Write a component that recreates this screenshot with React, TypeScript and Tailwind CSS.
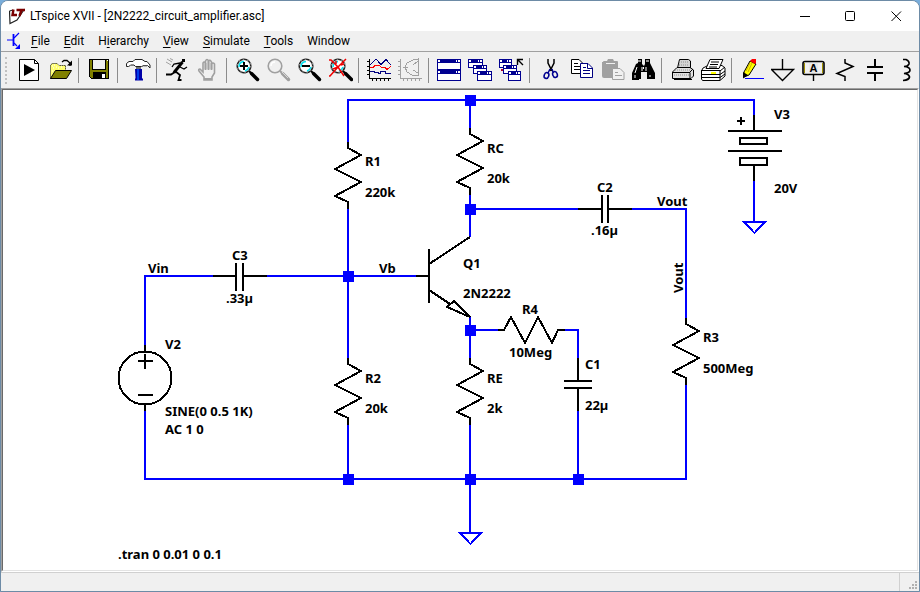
import type { ReactNode } from 'react';

const menus = [
  { before: '', key: 'F', after: 'ile' },
  { before: '', key: 'E', after: 'dit' },
  { before: 'H', key: 'i', after: 'erarchy' },
  { before: '', key: 'V', after: 'iew' },
  { before: '', key: 'S', after: 'imulate' },
  { before: '', key: 'T', after: 'ools' },
  { before: 'Window', key: '', after: '' },
];

// Magnifier shared by the four zoom tools
function Lens({ dim = false, children }: { dim?: boolean; children?: ReactNode }) {
  const ink = dim ? '#a0a0a0' : '#000';
  return (
    <>
      <circle cx="9" cy="8" r="6.800" fill={dim ? '#f0f0f0' : '#fff'} stroke={dim ? '#a0a0a0' : '#222'} strokeWidth="1.600" />
      {dim ? (
        <path d="M5 8 Q5 4 9 4" fill="none" stroke="#fff" strokeWidth="1.500" />
      ) : (
        <>
          <path d="M4 9 Q4 4 9 3.500M10 13 Q13 12 14 9" fill="none" stroke="#00e0f0" strokeWidth="1.500" />
          <circle cx="9" cy="8" r="7" fill="none" stroke="#909090" strokeWidth="1.600" strokeDasharray="1.500 3" />
        </>
      )}
      <path d="M14 13L16 15" stroke={ink} strokeWidth="2" />
      <path d="M16.500 15.500L22.500 21.500" stroke={ink} strokeWidth="3.500" strokeLinecap="round" />
      {dim && <path d="M16 14L22 20" stroke="#d8d8d8" strokeWidth="1" />}
      {children}
    </>
  );
}

function MiniWindow({ x, y, w = 14, h = 9 }: { x: number; y: number; w?: number; h?: number }) {
  return (
    <g shapeRendering="crispEdges">
      <rect x={x} y={y} width={w} height={h} fill="#000090" />
      <rect x={x + 1} y={y + 4} width={w - 2} height={h - 5} fill="#fff" />
      <rect x={x + 1} y={y + 1} width="2" height="2" fill="#fff" />
      <rect x={x + w - 5} y={y + 1} width="1" height="2" fill="#fff" />
      <rect x={x + w - 3} y={y + 1} width="2" height="2" fill="#fff" />
    </g>
  );
}

const icons: Record<string, ReactNode> = {
  new: (
    <>
      <path d="M2.500 1.500H17.500L21.500 5.500V22.500H2.500Z" fill="#fff" stroke="#000" />
      <path d="M17.500 1.500V5.500H21.500" fill="none" stroke="#000" />
      <path d="M7 6L18 12L7 18Z" />
    </>
  ),
  open: (
    <>
      <path d="M2.500 20.500V7L4.500 5.500H9L11 7.500H17.500V13H7Z" fill="#ffff70" />
      <path d="M2.500 20.500V7L4.500 5.500H9L11 7.500H17.500V12" fill="none" stroke="#000" strokeDasharray="1 1" />
      <path d="M4 8h1M6 7h1M8 9h1M5 10h1M10 10h1M13 9h1M4 13h1" stroke="#fff" />
      <path d="M2.500 20.500L7.500 12.500H23.500L18.500 20.500Z" fill="#808000" stroke="#000" />
      <path d="M14 4L16 2.500H19L22 5V8" fill="none" stroke="#000" strokeWidth="1.300" />
      <path d="M19 7.500H24V2.500Z" />
    </>
  ),
  save: (
    <g shapeRendering="crispEdges">
      <path d="M2 1H22V21H4L2 19Z" fill="#000" />
      <path d="M3 2H5V12H19V2H21V20H19V14H6V20H4L3 19Z" fill="#808000" />
      <rect x="6" y="2" width="12" height="9" fill="#f0f0f0" />
      <rect x="5" y="12" width="14" height="2" fill="#808000" />
      <rect x="15" y="16" width="3" height="4" fill="#fff" />
      <rect x="20" y="2" width="1" height="1" fill="#fff" />
    </g>
  ),
  hammer: (
    <>
      <path d="M9 11H16V20L17 21V22.500H9V21L9.500 20Z" fill="#0000a8" />
      <path d="M12 11V22" stroke="#0050ff" strokeWidth="1.500" />
      <path d="M.500 5.500L3 3.500H7L9 1.500H16L19 3.500H21L24 7V10L21.500 7.500H18L15.500 8.500H9.500L8 7H5L2.500 8.500H.500Z" fill="#fff" stroke="#222" />
      <path d="M4 7.500H8M18 8H21" stroke="#808080" />
      <path d="M10 9H15V11H10Z" fill="#707070" />
    </>
  ),
  run: (
    <>
      <path d="M17 1H20V4H17Z" />
      <path d="M17.500 4L9 14.500" stroke="#000" strokeWidth="3" />
      <path d="M15 5L9 6L7 9M15 9L19 11L22 9" fill="none" stroke="#000" strokeWidth="1.300" />
      <path d="M10 14L6 16.500H1M10 13L15 17L13.500 22H16.500" fill="none" stroke="#000" strokeWidth="1.800" />
      <path d="M2 1L7 4M1 4L6 7M5 .500L8 2" stroke="#a0a0a0" />
    </>
  ),
  hand: (
    <>
      <path
        d="M8 19L3 13Q2 11 4 11L7 14V5Q8 3 9.500 5V11V3Q11 0 12.500 3V11V3Q14 1 15.500 4V11V6Q17 4 18.500 6V15L16 19V22H8Z"
        fill="#f0f0f0"
        stroke="#a0a0a0"
        strokeWidth="1.600"
      />
      <path d="M8 21H16M9.500 5V12M12.500 3V12M15.500 5V12" stroke="#a0a0a0" strokeWidth="1.800" />
    </>
  ),
  zoomIn: (
    <Lens>
      <path d="M9 4V12M5 8H13" stroke="#000" strokeWidth="2" />
    </Lens>
  ),
  zoomBack: <Lens dim />,
  zoomOut: (
    <Lens>
      <path d="M5 8H13" stroke="#000" strokeWidth="2" />
    </Lens>
  ),
  zoomFit: (
    <g transform="translate(1 0)">
      <Lens>
        <path d="M0 2H2L9 9L15 18M17 1L9 9L1 18H0M9 9L4 11M7 3V6M12 7L15 6" fill="none" stroke="#f00000" strokeWidth="1.500" />
      </Lens>
    </g>
  ),
  plot: (
    <g shapeRendering="crispEdges" fill="none">
      <path d="M2.500 1V21M2 20.500H24M0 3.500H2M0 8.500H2M0 12.500H2M0 16.500H2M5.500 21V23M9.500 21V23M13.500 21V23M17.500 21V23M21.500 21V23" stroke="#000" />
      <path d="M3 7L9 1L14 6.500L19 1.500L24 7" stroke="#000080" />
      <path d="M3 9.500H6L8 7.500H12L15 9.500H18L20 11.500L24 8.500" stroke="#f00" />
      <path d="M3 13.500H7V14.500H11V15.500H13V13.500H18V15.500H24" stroke="#000080" />
    </g>
  ),
  fft: (
    <g shapeRendering="crispEdges" fill="none" stroke="#a0a0a0">
      <path d="M2.500 1V21M2 20.500H24M0 3.500H2M0 8.500H2M0 12.500H2M0 16.500H2M5.500 21V23M9.500 21V23M13.500 21V23M17.500 21V23M21.500 21V23" />
      <path d="M20.500 0V18M20 1L15 2L9 5L7 9L9 14L14 17L20 18M20 3L15 7M20 15L15 12" />
      <path d="M5 9.500H10" />
    </g>
  ),
  tile: (
    <>
      <MiniWindow x={0} y={1} w={24} h={11} />
      <MiniWindow x={0} y={12} w={24} h={11} />
    </>
  ),
  cascade: (
    <>
      <MiniWindow x={0} y={1} w={15} />
      <MiniWindow x={5} y={7} />
      <MiniWindow x={9} y={13} w={15} h={10} />
    </>
  ),
  closeAll: (
    <>
      <MiniWindow x={0} y={1} w={13} />
      <MiniWindow x={4} y={7} />
      <MiniWindow x={9} y={13} w={13} h={10} />
      <rect x="2" y="11" width="2" height="2" fill="#b00030" />
      <path d="M18.500 7V1.500H24M19 2L24 7" fill="none" stroke="#000" strokeWidth="1.400" />
    </>
  ),
  cut: (
    <>
      <path d="M10 1V5L14 13M16 1V5L12 13" fill="none" stroke="#000" strokeWidth="1.500" />
      <path d="M12 11L10 15M14 11L15 14" stroke="#000090" strokeWidth="1.500" />
      <ellipse cx="8.500" cy="17.500" rx="2.300" ry="3" fill="none" stroke="#000090" strokeWidth="1.500" transform="rotate(20 8.500 17.500)" />
      <ellipse cx="17" cy="16.500" rx="2.300" ry="3" fill="none" stroke="#000090" strokeWidth="1.500" transform="rotate(-20 17 16.500)" />
    </>
  ),
  copy: (
    <>
      <path d="M2.500 1.500H10L14 5.500V15.500H2.500Z" fill="#fff" stroke="#000" />
      <path d="M5 5.500H9M5 8.500H11M5 11.500H11" stroke="#000" />
      <path d="M11.500 5.500H19L23.500 10V19.500H11.500Z" fill="#fff" stroke="#000080" />
      <path d="M18.500 6V10.500H23M14 9.500H17M14 12.500H21M14 15.500H21" fill="none" stroke="#000080" />
    </>
  ),
  paste: (
    <>
      <path d="M3 4Q3 3 4 3H7L8 1H13L14 3H17Q18 3 18 4V19Q18 20 17 20H4Q2 20 2 18V4Z" fill="#a0a0a0" />
      <path d="M6 5.500H15" stroke="#f0f0f0" />
      <path d="M12.500 10.500H20L24 14.500V21.500H12.500Z" fill="#f0f0f0" stroke="#a0a0a0" />
      <path d="M15 14.500H18M15 17.500H22" stroke="#a0a0a0" />
    </>
  ),
  find: (
    <>
      <path d="M7 1H11V6L13 8L14 6V1H19V5L24 15V21H16V14H10V21H8V22H1V15L5 6L7 5Z" />
      <path d="M7 3H10M15 3H18" stroke="#909090" strokeWidth="2" />
      <path d="M6 9L4 15M11 9V13M15 9V13M4 17V20M19 17V19" stroke="#fff" strokeWidth="1" />
      <path d="M12.500 9V11" stroke="#fff" />
    </>
  ),
  print: (
    <>
      <path d="M7.500 10L9.500 1.500H18.500L20.500 3V10" fill="#d4d4d4" stroke="#000" />
      <path d="M2.500 14L7 9.500H20L23.500 12V18L21 20.500H2.500Z" fill="#e0e0e0" stroke="#000" />
      <path d="M3 14.500H20V20M20 14L23 11M4 21.500H22" fill="none" stroke="#000" />
      <path d="M9 4H18M9 7H18M5 12H20M4 17H19" stroke="#909090" strokeDasharray="1 1" />
    </>
  ),
  printSetup: (
    <>
      <path d="M2 10L7 7.500H21L24 10V18L19 22.500H1.500L.500 21V13Z" fill="#fff" stroke="#000" />
      <path d="M5 10.500L9 1.500H22L18 10.500Z" fill="#fff" stroke="#000" />
      <path d="M10 4H18M9 6.500H17M8 9H16M0 12.500H19V22M19 13L24 9M0 16.500H19L24 13M1 19.500H19L24 16" fill="none" stroke="#000" />
      <path d="M10 15H15" stroke="#ffff00" strokeWidth="2" />
    </>
  ),
  pencil: (
    <>
      <path d="M4 14L10 3L16 6L9 17L4 19Z" fill="#ffff00" stroke="#000" />
      <path d="M8 14L12 5M6 13L10 5" stroke="#c0a000" strokeWidth=".800" />
      <path d="M10 3L12 1H16V5L15 6Z" fill="#ff0000" />
      <path d="M3 14L8 17L3 20.500Z" />
      <path d="M5 20.500H24" stroke="#0000ff" shapeRendering="crispEdges" />
    </>
  ),
  ground: (
    <path d="M11.500 1V12M.500 11.500H22.500L11.500 22.500Z" fill="none" stroke="#000" strokeWidth="1.400" />
  ),
  label: (
    <>
      <rect x="1" y="3.500" width="21" height="13" rx="2" fill="#f0f0f0" stroke="#000" strokeWidth="1.600" />
      <path d="M2.500 5V15M20.500 5V15" stroke="#a09000" />
      <path d="M11.500 17V23" stroke="#000" strokeWidth="1.400" />
      <rect x="7" y="5" width="9" height="10" fill="#e8e8e8" />
      <text x="11.500" y="14" textAnchor="middle" className="font-['Liberation_Sans'] text-[11px] font-bold">A</text>
    </>
  ),
  resistor: <path d="M12 1V5L20 8.500L4 15.500L12 18.500V23" fill="none" stroke="#000" strokeWidth="1.500" />,
  capacitor: (
    <g shapeRendering="crispEdges">
      <path d="M11 1V8M11 16V23" stroke="#000" strokeWidth="2" />
      <path d="M3 9H19M3 15H19" stroke="#000" strokeWidth="2" />
    </g>
  ),
  inductor: (
    <path d="M8 1.500H11Q14.500 3 14 6Q13 8.500 9 8.500Q15 9 15 12Q15 15 9 15.500Q14 16 14.500 19Q14 22 8 22.500" fill="none" stroke="#000" strokeWidth="1.700" />
  ),
};

const toolGroups = [
  [
    { icon: 'new', label: 'New schematic' },
    { icon: 'open', label: 'Open' },
  ],
  [{ icon: 'save', label: 'Save' }],
  [{ icon: 'hammer', label: 'Control panel' }],
  [
    { icon: 'run', label: 'Run' },
    { icon: 'hand', label: 'Halt', disabled: true },
  ],
  [
    { icon: 'zoomIn', label: 'Zoom in' },
    { icon: 'zoomBack', label: 'Zoom back', disabled: true },
    { icon: 'zoomOut', label: 'Zoom out' },
    { icon: 'zoomFit', label: 'Zoom full extents' },
  ],
  [
    { icon: 'plot', label: 'Autorange' },
    { icon: 'fft', label: 'Pick visible traces', disabled: true },
  ],
  [
    { icon: 'tile', label: 'Tile windows' },
    { icon: 'cascade', label: 'Cascade windows' },
    { icon: 'closeAll', label: 'Close all windows' },
  ],
  [
    { icon: 'cut', label: 'Cut' },
    { icon: 'copy', label: 'Copy' },
    { icon: 'paste', label: 'Paste', disabled: true },
    { icon: 'find', label: 'Find' },
  ],
  [
    { icon: 'print', label: 'Print' },
    { icon: 'printSetup', label: 'Print setup' },
  ],
  [
    { icon: 'pencil', label: 'Wire' },
    { icon: 'ground', label: 'Ground' },
    { icon: 'label', label: 'Label net' },
    { icon: 'resistor', label: 'Resistor' },
    { icon: 'capacitor', label: 'Capacitor' },
    { icon: 'inductor', label: 'Inductor' },
  ],
];

function TitleBar() {
  return (
    <header className="flex h-[30px] shrink-0 items-center bg-white pl-2">
      <svg width="17" height="17" viewBox="0 0 17 17" className="mr-1">
        <path d="M.500 3L4 2M15.500 1L8 12L1 15.500L.500 3" fill="none" stroke="#222" strokeWidth="1.200" />
        <path d="M4.500 1.500L3.500 7H8M7.500 2H16M12.500 2L10.500 8" fill="none" stroke="#7a0000" strokeWidth="2.400" />
      </svg>
      <h1 className="text-[12px]">LTspice XVII - [2N2222_circuit_amplifier.asc]</h1>
      <div className="ml-auto flex h-full">
        <button aria-label="Minimize" className="flex w-[46px] items-center justify-center">
          <svg width="11" height="11" shapeRendering="crispEdges">
            <path d="M0 5.500H10" stroke="#000" />
          </svg>
        </button>
        <button aria-label="Maximize" className="flex w-[45px] items-center justify-center">
          <svg width="11" height="11">
            <rect x=".5" y=".5" width="9" height="9" rx="1" fill="none" stroke="#000" />
          </svg>
        </button>
        <button aria-label="Close" className="flex w-[46px] items-center justify-center">
          <svg width="11" height="11">
            <path d="M.500 .500L10 10M10 .500L.500 10" stroke="#000" />
          </svg>
        </button>
      </div>
    </header>
  );
}

function MenuBar() {
  return (
    <nav className="flex h-5 shrink-0 items-center pl-1">
      <svg width="16" height="18" viewBox="0 0 16 18" className="mr-[3px]">
        <path d="M2 8H8M9 6L14 1M9 11L12 14" fill="none" stroke="#0000ff" strokeWidth="1.200" />
        <path d="M8.500 2V14" stroke="#0000ff" strokeWidth="1.800" />
        <path d="M15 12V17H10Z" fill="#0000ff" />
      </svg>
      {menus.map((m) => (
        <button key={m.before + m.key + m.after} className="px-[7px] text-[12px] leading-5">
          {m.before}
          <span className="underline underline-offset-2">{m.key}</span>
          {m.after}
        </button>
      ))}
    </nav>
  );
}

function Toolbar() {
  return (
    <div role="toolbar" className="flex h-[37px] shrink-0 items-center overflow-hidden border-t border-[#a0a0a0] pt-px">
      <div className="mr-[7px] ml-[4px] h-[27px] w-[2px] border-l-2 border-dotted border-[#c0c0c0]" />
      {toolGroups.map((group, i) => (
        <div key={i} className="flex shrink-0 items-center">
          {i > 0 && <span className="mr-[5px] ml-[2px] h-[25px] w-px bg-[#8c8c8c]" />}
          {group.map((tool) => (
            <button
              key={tool.icon}
              aria-label={tool.label}
              disabled={'disabled' in tool}
              className="flex h-[31px] w-[31px] items-center justify-center"
            >
              <svg width="25" height="25" viewBox="0 0 25 25">
                {icons[tool.icon]}
              </svg>
            </button>
          ))}
        </div>
      ))}
    </div>
  );
}

const nodes = [
  [470, 100],
  [470, 209],
  [348, 276],
  [470, 330],
  [348, 479],
  [470, 479],
  [578, 479],
];

const resistors = [
  'translate(348 142)',
  'translate(470 128)',
  'translate(348 358)',
  'translate(470 358)',
  'translate(686 318)',
  'translate(498 330) rotate(-90)',
];

const labels: [number, number, string][] = [
  [365, 166, 'R1'],
  [365, 197, '220k'],
  [487, 153, 'RC'],
  [487, 183, '20k'],
  [774, 119, 'V3'],
  [774, 193, '20V'],
  [597, 192, 'C2'],
  [591, 235, '.16µ'],
  [657, 206, 'Vout'],
  [148, 273, 'Vin'],
  [232, 260, 'C3'],
  [226, 303, '.33µ'],
  [379, 273, 'Vb'],
  [463, 268, 'Q1'],
  [463, 298, '2N2222'],
  [522, 314, 'R4'],
  [509, 357, '10Meg'],
  [585, 369, 'C1'],
  [585, 410, '22µ'],
  [703, 342, 'R3'],
  [703, 373, '500Meg'],
  [165, 349, 'V2'],
  [165, 416, 'SINE(0 0.5 1K)'],
  [165, 434, 'AC 1 0'],
  [365, 383, 'R2'],
  [365, 413, '20k'],
  [487, 383, 'RE'],
  [487, 413, '2k'],
  [118, 559, '.tran 0 0.01 0 0.1'],
];

function Schematic() {
  return (
    <svg width="914" height="480" viewBox="3 90 914 480" className="block font-['Noto_Sans','Open_Sans',sans-serif] text-[13px] font-bold">
      {/* Wires */}
      <g fill="none" stroke="#0000ff" strokeWidth="2" shapeRendering="crispEdges">
        <path d="M348 142V100H754V115M470 100V128M348 209V358M348 425V479M470 195V237M470 317V358M470 425V533" />
        <path d="M145 345V276H213M267 276H416M470 209H578M632 209H686V318M686 385V479H145V411" />
        <path d="M470 330H498M564 330H578V358M578 411V479M754 181V222" />
        <path d="M744 222H765L754.500 233ZM460 533H481L470.500 544Z" />
      </g>
      {/* Resistors */}
      {resistors.map((t) => (
        <path key={t} transform={t} d="M0 0V6L13 13L-13 27L13 40L-13 54L0 60V67" fill="none" stroke="#000" strokeWidth="2" shapeRendering="crispEdges" />
      ))}
      <g fill="none" stroke="#000" strokeWidth="2" shapeRendering="crispEdges">
        {/* C3, C2, C1 */}
        <path d="M213 276H236M236 263V291M243 263V291M243 276H267" />
        <path d="M578 209H602M602 195V223M608 195V223M608 209H632" />
        <path d="M578 358V381M564 381H592M564 388H592M578 388V411" />
        {/* Q1 */}
        <path d="M416 276H429M429 249V303M429 264L470 237M429 290L450 304M470 317L454 301L447 307Z" />
        {/* V2 */}
        <circle cx="145" cy="378" r="26.500" />
        <path d="M145 345V351M145 405V411M138 361H153M145 354V369M138 395H153" />
        {/* V3 */}
        <path d="M754 115V131M728 131H782M740 138H767V144H740ZM728 151H782M740 158H767V165H740ZM754 165V181M737 121H745M741 117V125" />
      </g>
      {nodes.map(([x, y]) => (
        <rect key={`${x}-${y}`} x={x - 5} y={y - 5} width="11" height="11" fill="#0000ff" />
      ))}
      {labels.map(([x, y, text]) => (
        <text key={`${x}-${y}`} x={x} y={y}>
          {text}
        </text>
      ))}
      <text transform="translate(683 293) rotate(-90)">Vout</text>
    </svg>
  );
}

export default function App() {
  return (
    <div className="h-screen bg-[#79addb]">
      <div className="flex h-full flex-col overflow-hidden rounded-t-lg border border-[#6d8ba6] bg-[#f0f0f0] font-[Roboto,'Open_Sans',sans-serif] text-black">
        <TitleBar />
        <MenuBar />
        <Toolbar />
        <main className="flex min-h-0 flex-1 flex-col border border-t-[#a0a0a0] border-r-white border-b-white border-l-[#a0a0a0]">
          <div className="min-h-0 flex-1 overflow-hidden border border-t-[#696969] border-r-[#e3e3e3] border-b-[#e3e3e3] border-l-[#696969] bg-white">
            <Schematic />
          </div>
        </main>
        <footer className="flex h-[19px] shrink-0 justify-end border-t border-[#d0d0d0]">
          <div className="flex w-5 items-end justify-end border-l border-[#d0d0d0] pr-px pb-px">
            <svg width="9" height="9" fill="#b0b0b0">
              <path d="M6 0h2v2h-2zM3 3h2v2h-2zM6 3h2v2h-2zM0 6h2v2h-2zM3 6h2v2h-2zM6 6h2v2h-2z" />
            </svg>
          </div>
        </footer>
      </div>
    </div>
  );
}
